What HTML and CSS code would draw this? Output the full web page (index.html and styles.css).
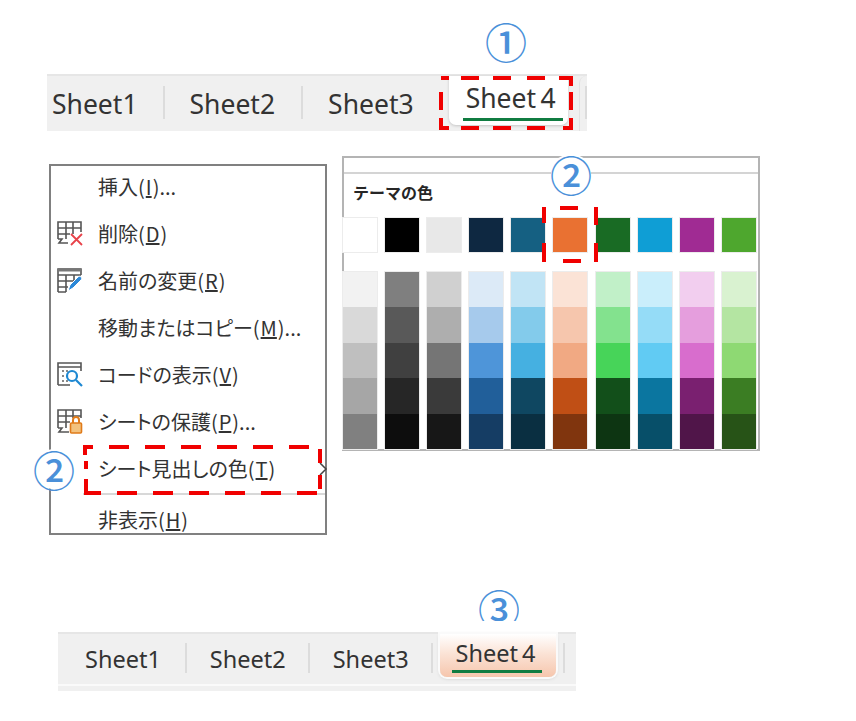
FILE: index.html
```html
<html>
<head>
<meta charset="utf-8">
<link rel="stylesheet" href="styles.css">
</head>
<body>
<div class="page">
    <div class="callout callout-one">①</div>
    <div class="sheetbar bar-top">
        <div class="tab first">Sheet1</div><div class="sep"></div>
        <div class="tab">Sheet2</div><div class="sep"></div>
        <div class="tab">Sheet3</div>
        <div class="tab active"><span>Sheet 4</span></div>
        <div class="nexttab"><div class="sep"></div></div>
        <svg class="dashes dash-tab" width="134" height="54" viewBox="0 0 134 54">
            <path d="M2 2H10M22 2H40M54 2H72M88 2H106M120 2H132V10M132 16V34M132 42V52H124M106 52H88M72 52H54M40 52H22M10 52H2V42M2 34V16"/>
        </svg>
    </div>

    <div class="middle">
        <div class="menu">
            <div class="item"><span class="icon"></span>挿入(<u>I</u>)...</div>
            <div class="item">
                <svg class="icon" width="27" height="26" viewBox="0 0 27 26">
                    <path class="gridline" d="M2 19V2H25V12M2 8H25M10 2V19M17 2V14M2 14H14M2 19H6L3 23H12"/>
                    <path class="redmark" d="M15 14L26 25M26 14L15 25"/>
                </svg>
                削除(<u>D</u>)
            </div>
            <div class="item">
                <svg class="icon" width="27" height="26" viewBox="0 0 27 26">
                    <path class="gridline" d="M2 25V2H25V8M2 8H25M2 14H18M2 20H12M2 25H10M10 8V25M18 8V14"/>
                    <path class="header" d="M2 3H25"/>
                    <path class="pencil" d="M12 24L14 18L22 10C24 8 27 11 25 13L17 21Z"/>
                </svg>
                名前の変更(<u>R</u>)
            </div>
            <div class="item"><span class="icon"></span>移動またはコピー(<u>M</u>)...</div>
            <div class="item">
                <svg class="icon" width="27" height="26" viewBox="0 0 27 26">
                    <path class="gridline" d="M2 24V2H25V10M2 6H25M2 24H14"/>
                    <path class="dots" d="M6 10H8M10 10H12M6 15H8M6 20H8M10 20H12"/>
                    <circle class="lens" cx="16" cy="15" r="5"/>
                    <path class="lens" d="M20 19L26 25"/>
                </svg>
                コードの表示(<u>V</u>)
            </div>
            <div class="item">
                <svg class="icon" width="27" height="26" viewBox="0 0 27 26">
                    <path class="gridline" d="M2 20V2H25V10M2 8H25M10 2V20M17 2V10M2 14H14M2 20H6L3 24H13"/>
                    <path class="shackle" d="M17 15V12C17 8 23 8 23 12V15"/>
                    <rect class="lock" x="14.5" y="15" width="11" height="10" rx="1"/>
                </svg>
                シートの保護(<u>P</u>)...
            </div>
            <div class="item tabcolor">
                <span class="icon"></span>シート見出しの色(<u>T</u>)
                <svg class="chevron" width="10" height="16" viewBox="0 0 10 16"><path d="M2 2L8 8L2 14"/></svg>
                <svg class="dashes dash-item" width="240" height="50" viewBox="0 0 240 50">
                    <path d="M2 10V2H10M26 2H46M62 2H82M98 2H118M134 2H154M170 2H190M206 2H226M237 4V18M237 30V44M234 48H214M198 48H178M162 48H142M126 48H106M90 48H70M54 48H34M18 48H3V34M3 24V16"/>
                </svg>
                <div class="callout callout-two">②</div>
            </div>
            <div class="item last"><span class="icon"></span>非表示(<u>H</u>)</div>
        </div>

        <div class="palette">
            <div class="palette-top"></div>
            <div class="callout callout-four">②</div>
            <div class="palette-title">テーマの色</div>
            <div class="theme-row">
                <div class="swatch" style="background:#ffffff"></div>
                <div class="swatch" style="background:#000000"></div>
                <div class="swatch" style="background:#e8e8e8"></div>
                <div class="swatch" style="background:#0e2841"></div>
                <div class="swatch" style="background:#156082"></div>
                <div class="swatch" style="background:#e97132"></div>
                <div class="swatch" style="background:#196b24"></div>
                <div class="swatch" style="background:#0f9ed5"></div>
                <div class="swatch" style="background:#a02b93"></div>
                <div class="swatch" style="background:#4ea72e"></div>
            </div>
            <div class="shade-row">
                <div class="shades"><i style="background:#f2f2f2"></i><i style="background:#d9d9d9"></i><i style="background:#bfbfbf"></i><i style="background:#a6a6a6"></i><i style="background:#808080"></i></div>
                <div class="shades"><i style="background:#7f7f7f"></i><i style="background:#595959"></i><i style="background:#404040"></i><i style="background:#262626"></i><i style="background:#0d0d0d"></i></div>
                <div class="shades"><i style="background:#d0d0d0"></i><i style="background:#aeaeae"></i><i style="background:#757575"></i><i style="background:#3a3a3a"></i><i style="background:#171717"></i></div>
                <div class="shades"><i style="background:#dceaf7"></i><i style="background:#a6caec"></i><i style="background:#4e95d9"></i><i style="background:#215f9a"></i><i style="background:#153d64"></i></div>
                <div class="shades"><i style="background:#c1e4f5"></i><i style="background:#83cbeb"></i><i style="background:#45b0e1"></i><i style="background:#0f4761"></i><i style="background:#0a2f41"></i></div>
                <div class="shades"><i style="background:#fbe3d6"></i><i style="background:#f6c6ad"></i><i style="background:#f1a983"></i><i style="background:#c04f15"></i><i style="background:#80350e"></i></div>
                <div class="shades"><i style="background:#c1f0c8"></i><i style="background:#83e28e"></i><i style="background:#47d459"></i><i style="background:#124f1a"></i><i style="background:#0d3512"></i></div>
                <div class="shades"><i style="background:#caeefb"></i><i style="background:#95dcf7"></i><i style="background:#61cbf3"></i><i style="background:#0b76a0"></i><i style="background:#074f69"></i></div>
                <div class="shades"><i style="background:#f2ceef"></i><i style="background:#e59edd"></i><i style="background:#d86dcd"></i><i style="background:#7a2070"></i><i style="background:#501549"></i></div>
                <div class="shades"><i style="background:#d9f2d0"></i><i style="background:#b4e5a2"></i><i style="background:#8ed973"></i><i style="background:#3b7d23"></i><i style="background:#275317"></i></div>
            </div>
            <svg class="dashes dash-swatch" width="56" height="58" viewBox="0 0 56 58">
                <path d="M2 1V17M2 37V56M18 2H36M21 55H39M54 1V19M54 37V56"/>
            </svg>
        </div>
    </div>

    <div class="callout-clip"><div class="callout callout-three">③</div></div>
    <div class="sheetbar bar-bottom">
        <div class="tab first">Sheet1</div><div class="sep"></div>
        <div class="tab">Sheet2</div><div class="sep"></div>
        <div class="tab">Sheet3</div><div class="sep"></div>
        <div class="tab active"><span>Sheet 4</span></div>
        <div class="nexttab"><div class="sep"></div></div>
    </div>
</div>
</body></html>
```

FILE: styles.css
```css
body, html {
    margin: 0;
    padding: 0;
    background: white;
}
.page {
    width: 856px;
    height: 721px;
    overflow: hidden;
    font-family: "Noto Sans CJK JP", "Noto Sans", sans-serif;
    color: #333;
    padding-top: 21px;
    box-sizing: border-box;
}

/* circled numbers */
.callout {
    width: 40px;
    height: 40px;
    display: flex;
    align-items: center;
    justify-content: center;
    font-size: 42px;
    font-weight: 500;
    line-height: 40px;
    color: #4a90d9;
    background: white;
    border-radius: 50%;
}
.callout-one {
    margin-left: 486px;
    margin-bottom: 13px;
}
.callout-two {
    position: absolute;
    left: -17px;
    top: 1px;
    z-index: 2;
}
.callout-four {
    position: absolute;
    left: 207px;
    top: -4px;
}
.callout-clip {
    width: 40px;
    height: 31px;
    overflow: hidden;
    margin: 55px 0 11px 479px;
}
.callout-three {
    margin-top: -2px;
}

.dashes {
    position: absolute;
    pointer-events: none;
}
.dashes path {
    fill: none;
    stroke: #f00000;
    stroke-width: 4;
}

/* sheet tabs */
.sheetbar {
    position: relative;
    display: flex;
    align-items: flex-start;
    background: #f0f0f0;
    font-family: "Noto Sans", sans-serif;
    box-sizing: border-box;
}
.tab {
    flex: none;
}
.sep {
    flex: none;
    width: 2px;
    background: #dcdcdc;
}
.active {
    background: white;
    border-radius: 0 0 7px 7px;
    box-shadow: 0 1px 3px rgba(0,0,0,0.18);
}
.active span {
    display: block;
    white-space: nowrap;
    word-spacing: -0.09em;
    border-bottom: 3px solid #107c41;
}
.nexttab {
    flex: 1 1 auto;
    min-width: 0;
    align-self: stretch;
    display: flex;
    align-items: flex-start;
}

.bar-top {
    width: 540px;
    height: 57px;
    margin-left: 47px;
    border-top: 2px solid #e6e6e6;
    font-size: 26.5px;
}
.bar-top .tab {
    padding: 9px 26px 0 25px;
    line-height: 38px;
}
.bar-top .first {
    padding-left: 5px;
    padding-right: 25px;
}
.bar-top .sep {
    height: 33px;
    margin-top: 10px;
}
.bar-top .active {
    width: 119px;
    height: 49px;
    box-sizing: border-box;
    margin-left: 9px;
    padding: 3px 5px 0 14px;
}
.bar-top .active span {
    width: 100px;
    box-sizing: border-box;
    padding-left: 3px;
    line-height: 38px;
    height: 42px;
}
.bar-top .nexttab {
    margin-left: 11px;
    border-top-left-radius: 7px;
    border-left: 1px solid #e2e2e2;
    background: #f0f0f0;
    padding-left: 5px;
}
.dash-tab {
    left: 392px;
    top: 0;
}

.bar-bottom {
    width: 518px;
    height: 59px;
    margin-left: 58px;
    border-top: 2px solid #e6e6e6;
    font-size: 23.5px;
}
.bar-bottom::after {
    content: "";
    position: absolute;
    left: 0;
    right: 0;
    top: 50px;
    height: 2px;
    background: #fafafa;
}
.bar-bottom .tab {
    padding: 8px 22px 0 23px;
    line-height: 34px;
}
.bar-bottom .first {
    padding-left: 27px;
    padding-right: 24px;
}
.bar-bottom .sep {
    height: 30px;
    margin-top: 9px;
}
.bar-bottom .active {
    width: 116px;
    height: 43px;
    box-sizing: border-box;
    margin-left: 7px;
    padding: 3px 0 0 12px;
    background: linear-gradient(to bottom, #ffffff 0%, #fbe3d6 45%, #f6c6ad 100%);
    position: relative;
    z-index: 1;
    box-shadow: 0 0 0 2px #fafafa, 0 1px 4px rgba(0,0,0,0.2);
}
.bar-bottom .active span {
    width: 90px;
    box-sizing: border-box;
    padding-left: 4px;
    line-height: 32px;
    height: 36px;
}
.bar-bottom .nexttab {
    margin-left: 4px;
    padding-left: 3px;
    border-top-left-radius: 7px;
}

/* right click menu and palette */
.middle {
    display: flex;
    align-items: flex-start;
    margin-top: 25px;
}
.menu {
    width: 278px;
    height: 371px;
    box-sizing: border-box;
    margin: 8px 0 0 49px;
    border: 2px solid #808080;
    font-size: 20px;
    font-feature-settings: "palt";
    flex: none;
}
.menu u {
    margin: 0 1px;
}
.item {
    position: relative;
    display: flex;
    align-items: center;
    height: 47px;
    box-sizing: border-box;
    padding: 0 0 7px 5px;
    white-space: nowrap;
}
.icon {
    flex: none;
    display: block;
    width: 27px;
    height: 26px;
    margin-right: 15px;
}
.icon path, .icon circle {
    fill: none;
}
.gridline {
    stroke: #555;
    stroke-width: 1.6;
}
.header {
    stroke: #777;
    stroke-width: 3;
}
.redmark {
    stroke: #e8434a;
    stroke-width: 1.8;
}
.icon .pencil {
    fill: #2b88d8;
    stroke: white;
    stroke-width: 1;
}
.dots {
    stroke: #888;
    stroke-width: 2;
}
.icon .lens {
    stroke: #1e88d2;
    stroke-width: 2.2;
}
.shackle {
    stroke: #e07b1a;
    stroke-width: 2;
}
.lock {
    fill: #f3c27e;
    stroke: #e07b1a;
    stroke-width: 1.6;
}
.tabcolor::after {
    content: "";
    position: absolute;
    left: 32px;
    right: 0;
    bottom: 0;
    height: 2px;
    background: #d8d8d8;
}
.chevron {
    position: absolute;
    right: -3px;
    top: 13px;
}
.chevron path {
    fill: none;
    stroke: #444;
    stroke-width: 1.5;
}
.dash-item {
    left: 32px;
    top: -3px;
    z-index: 1;
}
.item.last {
    height: 37px;
    padding: 12px 0 0 5px;
}

.palette {
    position: relative;
    width: 418px;
    height: 295px;
    box-sizing: border-box;
    margin-left: 15px;
    border: 2px solid #b4b4b4;
    flex: none;
}
.palette-top {
    height: 14px;
    border-bottom: 2px solid #d4d4d4;
}
.palette-title {
    margin: 6px 0 0 9px;
    font-size: 16px;
    font-weight: 700;
    line-height: 24px;
    color: #262626;
}
.theme-row, .shade-row {
    display: flex;
    gap: 8.1px;
    margin-left: -1px;
}
.theme-row {
    margin-top: 14px;
}
.shade-row {
    margin-top: 20px;
}
.swatch {
    width: 34px;
    height: 34px;
    flex: none;
    box-shadow: 0 0 0 1px #ececec;
}
.shades {
    width: 34px;
    flex: none;
    display: flex;
    flex-direction: column;
    box-shadow: 0 0 0 1px #ececec;
}
.shades i {
    display: block;
    height: 35.4px;
}
.dash-swatch {
    left: 198px;
    top: 48px;
}
```
